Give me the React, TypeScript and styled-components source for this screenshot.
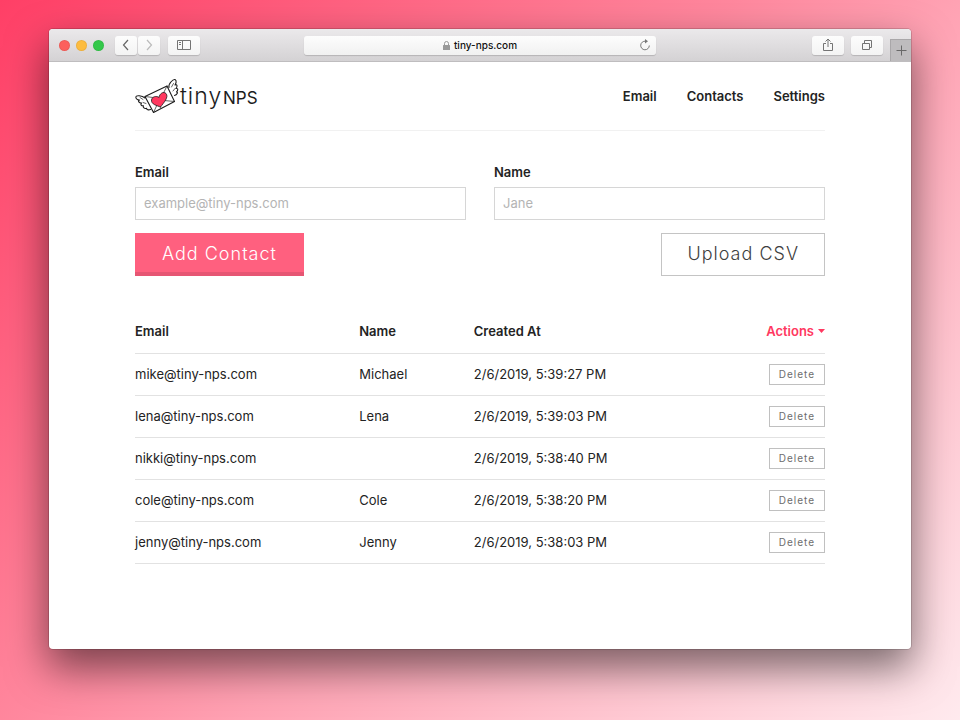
import React from "react";
import styled, { createGlobalStyle } from "styled-components";

const GlobalStyle = createGlobalStyle`
  *, *::before, *::after { box-sizing: border-box; }
  body {
    margin: 0;
    color: #232323;
    font: 13px/20px Inter, "Liberation Sans", sans-serif;
  }
`;

const Desktop = styled.div`
  min-height: 100vh;
  padding: 28px 48px 70px;
  display: flex;
  background: linear-gradient(135deg, #ff3f66 0%, #ff889e 44%, #ffa2b3 57%, #ffeaee 100%);
`;

const BrowserWindow = styled.div`
  flex: 1;
  min-width: 0;
  border: 1px solid rgba(0, 0, 0, 0.14);
  border-radius: 5px;
  background: #fff padding-box;
  box-shadow: 0 18px 40px rgba(0, 0, 0, 0.52);
  overflow: hidden;
`;

const Toolbar = styled.div`
  height: 33px;
  display: grid;
  grid-template-columns: 1fr minmax(160px, 352px) 1fr;
  align-items: center;
  background: linear-gradient(#ebe9eb, #d4d2d4);
  border-bottom: 1px solid #bfbdbf;
`;

const Group = styled.div<{ $gap: number; $start?: number; $end?: boolean }>`
  display: flex;
  align-items: center;
  align-self: stretch;
  padding-left: ${(p) => p.$start ?? 0}px;
  justify-content: ${(p) => (p.$end ? "flex-end" : "flex-start")};
  gap: ${(p) => p.$gap}px;
`;

const Light = styled.button<{ $color: string }>`
  width: 11px;
  height: 11px;
  padding: 0;
  border: 1px solid rgba(0, 0, 0, 0.06);
  border-radius: 50%;
  background: ${(p) => p.$color};
`;

const ToolButton = styled.button<{ $wide?: boolean }>`
  width: ${(p) => (p.$wide ? 32 : 22)}px;
  height: 19px;
  padding: 0;
  display: flex;
  align-items: center;
  justify-content: center;
  color: #747474;
  border: 0;
  border-radius: 3px;
  background: linear-gradient(#fdfdfd, #f3f3f3);
  box-shadow: 0 1px 1px rgba(0, 0, 0, 0.16);
`;

const AddressBar = styled.div`
  height: 19px;
  padding: 0 5px;
  display: grid;
  grid-template-columns: 1fr auto 1fr;
  align-items: center;
  border-radius: 3px;
  background: linear-gradient(#fdfdfd, #f1f1f1);
  box-shadow: 0 1px 1px rgba(0, 0, 0, 0.16);
`;

const Address = styled.span`
  grid-column: 2;
  display: flex;
  align-items: center;
  gap: 4px;
  color: #111;
  font-size: 10px;
  line-height: 18px;
  font-weight: 500;
`;

const Reload = styled.button`
  justify-self: end;
  display: flex;
  padding: 0;
  border: 0;
  background: none;
`;

const NewTab = styled.button`
  width: 21px;
  height: 22px;
  align-self: flex-end;
  padding: 0;
  display: flex;
  align-items: center;
  justify-content: center;
  border: solid #a9a7a9;
  border-width: 1px 0 0 1px;
  background: #bebcbe;
`;

const Page = styled.div`
  max-width: 738px;
  margin: 0 auto;
  padding: 0 24px 24px;
`;

const Header = styled.header`
  height: 69px;
  display: flex;
  align-items: center;
  justify-content: space-between;
  border-bottom: 1px solid #f1f1f1;
`;

const Brand = styled.a`
  display: flex;
  color: #1c1c1c;
  text-decoration: none;
`;

const Nav = styled.nav`
  display: flex;
  gap: 30px;
`;

const NavLink = styled.a`
  color: #232323;
  font-weight: 600;
  text-decoration: none;
`;

const Form = styled.form`
  margin-top: 31px;
`;

const Fields = styled.div`
  display: grid;
  grid-template-columns: 1fr 1fr;
  gap: 28px;
`;

const Field = styled.div`
  display: flex;
  flex-direction: column;
  gap: 5px;
`;

const Label = styled.label`
  font-weight: 600;
`;

const TextInput = styled.input`
  width: 100%;
  height: 33px;
  padding: 0 8px 2px;
  font: inherit;
  color: #232323;
  border: 1px solid #d6d6d6;
  border-radius: 0;
  &::placeholder { color: #b4b4b4; opacity: 1; }
`;

const FormActions = styled.div`
  margin-top: 13px;
  display: flex;
  justify-content: space-between;
`;

const Button = styled.button<{ $primary?: boolean }>`
  height: 43px;
  padding: ${(p) => (p.$primary ? "0 27px 2px" : "0 25px 2px")};
  font: 300 18px/38px Inter, "Liberation Sans", sans-serif;
  letter-spacing: 1px;
  color: ${(p) => (p.$primary ? "#fff" : "#404040")};
  background: ${(p) => (p.$primary ? "#ff607f" : "#fff")};
  border: ${(p) => (p.$primary ? "0" : "1px solid #c4c4c4")};
  box-shadow: ${(p) => (p.$primary ? "inset 0 -4px #e65673" : "none")};
`;

const Table = styled.table`
  width: 100%;
  margin-top: 34px;
  border-collapse: collapse;
  table-layout: fixed;
`;

const HeadCell = styled.th<{ $width?: string }>`
  width: ${(p) => p.$width ?? "auto"};
  height: 43px;
  padding: 0;
  text-align: left;
  font-weight: 600;
  border-bottom: 1px solid #e2e2e2;
  &:last-child { text-align: right; }
`;

const Cell = styled.td`
  height: 42px;
  padding: 0;
  border-bottom: 1px solid #e2e2e2;
  &:last-child { text-align: right; }
`;

const ActionsButton = styled.button`
  display: inline-flex;
  align-items: center;
  gap: 4px;
  padding: 0;
  font: inherit;
  color: #ff3860;
  border: 0;
  background: none;
`;

const DeleteButton = styled.button`
  height: 21px;
  padding: 0 9px;
  font: 10px/18px Inter, "Liberation Sans", sans-serif;
  letter-spacing: 1px;
  color: #6d6d6d;
  border: 1px solid #c0c0c0;
  background: #fff;
  vertical-align: middle;
`;

const contacts = [
  { email: "mike@tiny-nps.com", name: "Michael", created: "2/6/2019, 5:39:27 PM" },
  { email: "lena@tiny-nps.com", name: "Lena", created: "2/6/2019, 5:39:03 PM" },
  { email: "nikki@tiny-nps.com", name: "", created: "2/6/2019, 5:38:40 PM" },
  { email: "cole@tiny-nps.com", name: "Cole", created: "2/6/2019, 5:38:20 PM" },
  { email: "jenny@tiny-nps.com", name: "Jenny", created: "2/6/2019, 5:38:03 PM" },
];

const Logo = () => (
  <svg width="124" height="36" viewBox="0 0 124 36" role="img" aria-label="tinyNPS">
    <g fill="#fff" stroke="#1c1c1c" strokeWidth="1.1" strokeLinejoin="round" strokeLinecap="round">
      <path d="M10 20 C7 17.500 1 17 .8 19 C.8 21 3 22 4.500 22 C2.500 23 4 25 6.500 25 C5 26.500 6.500 28 8.500 27.800 C7.500 29.500 9.500 31 11.500 30.200 C11.500 31.500 13.500 32.500 15.500 31.500" />
      <path d="M34 9.500 C33 6 38 1 40 1.500 C42 2.500 41 5.500 40 7 C42.500 6 42.500 8.500 41 10.500 C43.500 10 43 12.500 41.500 14 C43.500 14 42 17 39.500 17.500" />
      <path d="M10 18.500 L32 8 L39.500 23.500 L18.500 34.500 Z" />
      <path d="M10 18.500 L22 20 M32 8 L28 16 M18.500 34.500 L22 27 M39.500 23.500 L29 22.500" fill="none" strokeWidth=".7" />
      <path d="M5 19.500 L8 21.500 M8 24.500 L11 25.500 M36.500 9 L38.500 5.500 M38 13 L40 10.500" fill="none" strokeWidth=".7" />
      <path d="M25.500 29 C22 27.500 16 26.500 16.500 22 C17 18.500 21.500 17.500 24 19.500 C24.500 15.500 28.500 13 31 15.500 C34 19 29 24.500 25.500 29 Z" fill="#ff385f" strokeWidth=".8" />
    </g>
    <text x="45" y="26" fill="currentColor" fontFamily="Inter, sans-serif" fontWeight="300" fontSize="23" letterSpacing="1">tiny</text>
    <text x="88" y="26" fill="currentColor" fontFamily="Inter, sans-serif" fontWeight="400" fontSize="17">NPS</text>
  </svg>
);

export default function App() {
  return (
    <>
      <GlobalStyle />
      <Desktop>
        <BrowserWindow>
          <Toolbar>
            <Group $gap={11} $start={10}>
              <Group $gap={6}>
                <Light $color="#fc605c" aria-label="Close" />
                <Light $color="#fdbc40" aria-label="Minimize" />
                <Light $color="#34c84a" aria-label="Zoom" />
              </Group>
              <Group $gap={8}>
                <Group $gap={1}>
                  <ToolButton aria-label="Back">
                    <svg width="12" height="14" viewBox="0 0 12 14" fill="none" stroke="#666" strokeWidth="1.200">
                      <path d="M8 2 L3.500 7 L8 12" />
                    </svg>
                  </ToolButton>
                  <ToolButton aria-label="Forward">
                    <svg width="12" height="14" viewBox="0 0 12 14" fill="none" stroke="#bbb" strokeWidth="1.200">
                      <path d="M4 2 L8.500 7 L4 12" />
                    </svg>
                  </ToolButton>
                </Group>
                <ToolButton $wide aria-label="Sidebar">
                  <svg width="14" height="12" viewBox="0 0 14 12" fill="none" stroke="currentColor">
                    <path d="M.5 1.500 H13.500 V10.500 H.5 Z M5.500 1.500 V10.500 M2 3.500 H4 M2 5.500 H4" />
                  </svg>
                </ToolButton>
              </Group>
            </Group>
            <AddressBar>
              <Address>
                <svg width="7" height="9" viewBox="0 0 7 9" aria-hidden="true">
                  <path d="M1.500 4 V2.500 a2 2 0 0 1 4 0 V4" fill="none" stroke="#999" />
                  <rect y="4" width="7" height="5" rx=".5" fill="#999" />
                </svg>
                tiny-nps.com
              </Address>
              <Reload aria-label="Reload">
                <svg width="12" height="12" viewBox="0 0 12 12">
                  <path d="M6.500 2.200 A4.300 4.300 0 1 0 10.300 6.500" fill="none" stroke="#777" />
                  <path d="M6 0 L9 2.200 L6 4.400 Z" fill="#777" />
                </svg>
              </Reload>
            </AddressBar>
            <Group $gap={7} $end>
              <ToolButton $wide aria-label="Share">
                <svg width="12" height="14" viewBox="0 0 12 14" fill="none" stroke="currentColor">
                  <path d="M4 5.500 H1.500 V12.500 H10.500 V5.500 H8 M6 9 V1.200 M3.500 3.500 L6 1 L8.500 3.500" />
                </svg>
              </ToolButton>
              <ToolButton $wide aria-label="Show tabs">
                <svg width="12" height="12" viewBox="0 0 12 12" fill="none" stroke="currentColor">
                  <path d="M1.500 4.500 H8.500 V10.500 H1.500 Z M3.500 4.500 V1.500 H10.500 V8.500 H8.500" />
                </svg>
              </ToolButton>
              <NewTab aria-label="New tab">
                <svg width="11" height="11" viewBox="0 0 11 11" stroke="#686868">
                  <path d="M5.500 .5 V10.500 M.5 5.500 H10.500" />
                </svg>
              </NewTab>
            </Group>
          </Toolbar>
          <Page>
            <Header>
              <Brand href="#"><Logo /></Brand>
              <Nav>
                <NavLink href="#email">Email</NavLink>
                <NavLink href="#contacts">Contacts</NavLink>
                <NavLink href="#settings">Settings</NavLink>
              </Nav>
            </Header>
            <Form onSubmit={(e) => e.preventDefault()}>
              <Fields>
                <Field>
                  <Label htmlFor="email">Email</Label>
                  <TextInput id="email" type="email" placeholder="example@tiny-nps.com" />
                </Field>
                <Field>
                  <Label htmlFor="name">Name</Label>
                  <TextInput id="name" type="text" placeholder="Jane" />
                </Field>
              </Fields>
              <FormActions>
                <Button $primary type="submit">Add Contact</Button>
                <Button type="button">Upload CSV</Button>
              </FormActions>
            </Form>
            <Table>
              <thead>
                <tr>
                  <HeadCell $width="32.5%">Email</HeadCell>
                  <HeadCell $width="16.6%">Name</HeadCell>
                  <HeadCell>Created At</HeadCell>
                  <HeadCell $width="20%">
                    <ActionsButton>
                      Actions
                      <svg width="7" height="4" viewBox="0 0 7 4"><path d="M0 0 H7 L3.500 4 Z" fill="currentColor" /></svg>
                    </ActionsButton>
                  </HeadCell>
                </tr>
              </thead>
              <tbody>
                {contacts.map((c) => (
                  <tr key={c.email}>
                    <Cell>{c.email}</Cell>
                    <Cell>{c.name}</Cell>
                    <Cell>{c.created}</Cell>
                    <Cell><DeleteButton>Delete</DeleteButton></Cell>
                  </tr>
                ))}
              </tbody>
            </Table>
          </Page>
        </BrowserWindow>
      </Desktop>
    </>
  );
}
